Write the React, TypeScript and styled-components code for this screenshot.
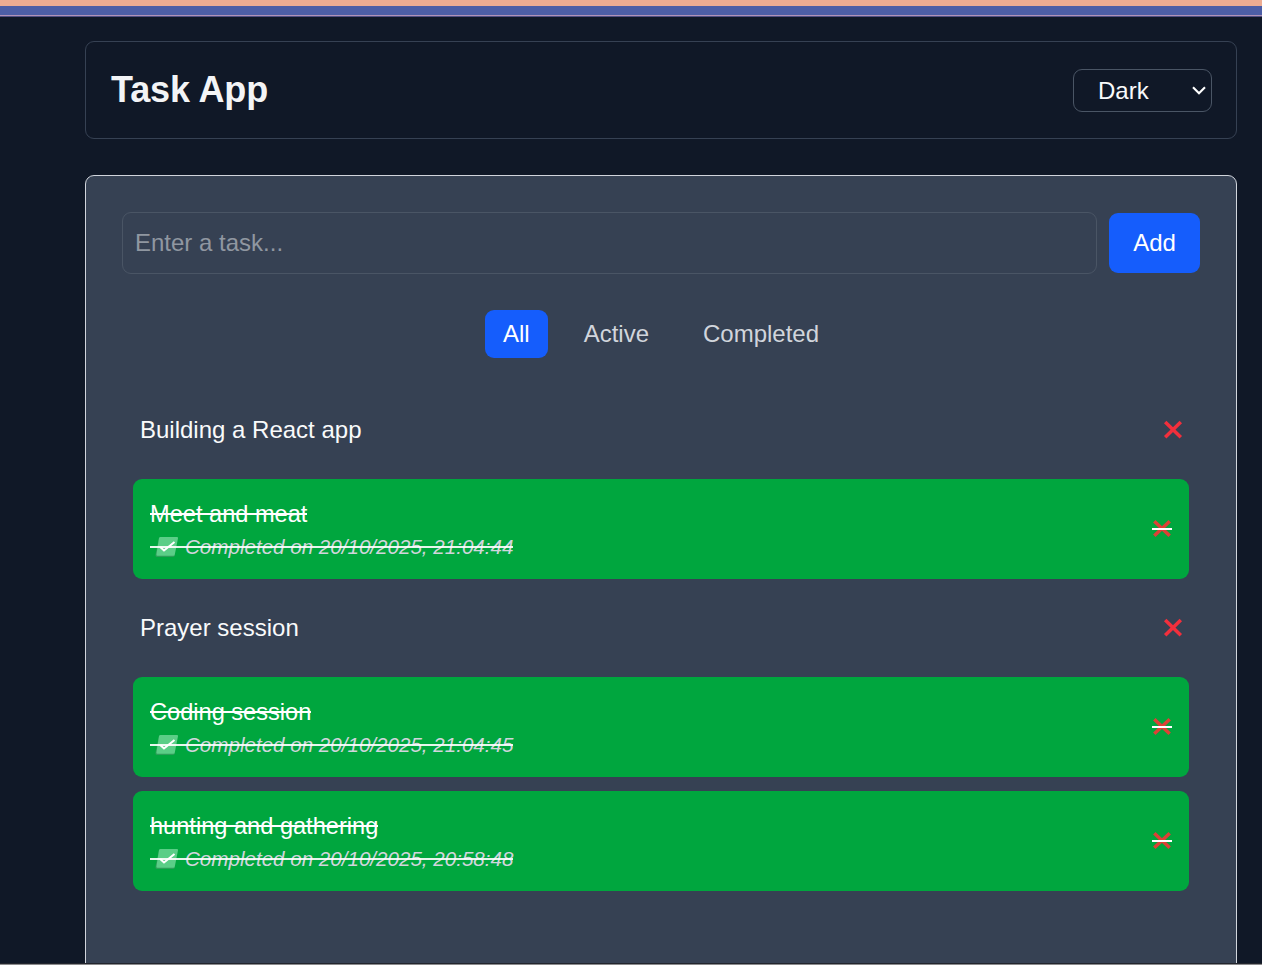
import React, { useState } from "react";
import styled, { createGlobalStyle } from "styled-components";

const GlobalStyle = createGlobalStyle`
  *, *::before, *::after { box-sizing: border-box; }
  body {
    margin: 0;
    background: #101827;
    color: #f9fafb;
    font-family: "Liberation Sans", Arial, sans-serif;
    font-size: 24px;
    line-height: 36px;
  }
  button, input, select { font: inherit; color: inherit; margin: 0; }
`;

const Screen = styled.div`
  height: 965px;
  display: flex;
  flex-direction: column;
  overflow: hidden;
`;

const Stripe = styled.div<{ $height: number; $color: string }>`
  flex: none;
  height: ${(p) => p.$height}px;
  background: ${(p) => p.$color};
`;

const Page = styled.div`
  flex: 1;
  min-height: 0;
  overflow: hidden;
  padding: 24px 25px 0 85px;
  display: flex;
  flex-direction: column;
  gap: 36px;
`;

const Header = styled.header`
  flex: none;
  height: 98px;
  padding: 0 24px 0 25px;
  display: flex;
  align-items: center;
  justify-content: space-between;
  border: 1px solid #364153;
  border-radius: 9px;
`;

const Title = styled.h1`
  margin: 0;
  font-size: 36px;
  line-height: 42px;
  font-weight: 700;
  letter-spacing: -0.12px;
  color: #f3f4f6;
`;

const SelectWrap = styled.div`
  position: relative;
  display: flex;
`;

const ThemeSelect = styled.select`
  appearance: none;
  width: 139px;
  height: 43px;
  padding: 2px 24px 0;
  background: transparent;
  border: 1px solid #4a5565;
  border-radius: 9px;
  line-height: 30px;
`;

const Chevron = styled.svg`
  position: absolute;
  right: 5px;
  top: 15px;
  pointer-events: none;
`;

const Panel = styled.main`
  flex: none;
  height: 1000px;
  padding: 36px;
  background: #364153;
  border: 1px solid #d1d5dc;
  border-radius: 9px;
`;

const Form = styled.form`
  display: flex;
  align-items: center;
  gap: 12px;
`;

const TaskInput = styled.input`
  flex: 1;
  min-width: 0;
  height: 62px;
  padding: 0 12px;
  background: transparent;
  border: 1px solid #4a5565;
  border-radius: 9px;
  &::placeholder { color: #9097a1; opacity: 1; }
`;

const AddButton = styled.button`
  width: 91px;
  height: 60px;
  padding: 0;
  border: 0;
  border-radius: 9px;
  background: #155dfc;
  color: #fff;
`;

const Filters = styled.nav`
  display: flex;
  justify-content: center;
  gap: 18px;
  margin: 36px 0 37px;
`;

const FilterButton = styled.button<{ $active: boolean }>`
  height: 48px;
  padding: 0 18px;
  border: 0;
  border-radius: 9px;
  background: ${(p) => (p.$active ? "#155dfc" : "transparent")};
  color: ${(p) => (p.$active ? "#fff" : "#d1d5dc")};
`;

const List = styled.ul`
  list-style: none;
  margin: 0;
  padding: 0 11px;
  display: flex;
  flex-direction: column;
  gap: 14px;
`;

const Item = styled.li<{ $done: boolean }>`
  display: flex;
  align-items: center;
  justify-content: space-between;
  height: ${(p) => (p.$done ? 100 : 70)}px;
  padding: ${(p) => (p.$done ? "0 17px" : "0 6px 0 7px")};
  border-radius: 9px;
  background: ${(p) => (p.$done ? "#00a63e" : "transparent")};
  color: ${(p) => (p.$done ? "#fff" : "#f9fafb")};
`;

const ItemBody = styled.div`
  display: flex;
  flex-direction: column;
  align-items: flex-start;
`;

const TaskText = styled.div<{ $done: boolean }>`
  position: relative;
  font-size: ${(p) => (p.$done ? 23.6 : 24)}px;
  &::after {
    content: "";
    display: ${(p) => (p.$done ? "block" : "none")};
    position: absolute;
    left: 0;
    right: 0;
    top: 17px;
    height: 2px;
    background: #fff;
  }
`;

const DoneNote = styled.div`
  position: relative;
  display: flex;
  align-items: center;
  height: 30px;
  font-size: 20.58px;
  line-height: 30px;
  font-style: italic;
  color: #d1d5dc;
  &::after {
    content: "";
    position: absolute;
    left: 0;
    right: 0;
    top: 14px;
    height: 2px;
    background: rgba(255, 255, 255, 0.9);
  }
`;

const NoteIcon = styled.svg`
  flex: none;
  margin: 0 6px 0 4px;
`;

const RemoveButton = styled.button`
  display: flex;
  padding: 0;
  border: 0;
  background: none;
`;

function CheckIcon() {
  return (
    <NoteIcon width="25" height="22" viewBox="0 0 25 22">
      <path d="M5 1.5 L1.6 18 Q1 21 3 21 L19 21 Q20.6 21 21 19.2 Z" fill="#2c9d58" />
      <path d="M6.4 1 H23 Q24.2 1 24 2.2 L20.8 18.6 Q20.6 19.8 19.4 19.8 H3.4 Q2.2 19.8 2.4 18.6 L5 2.2 Q5.2 1 6.4 1Z" fill="#5bce87" />
      <path d="M6.2 11 L10 14.5 L20.5 6" fill="none" stroke="#fff" strokeWidth="2" />
    </NoteIcon>
  );
}

function CrossIcon({ struck }: { struck: boolean }) {
  return (
    <svg width="20" height="20" viewBox="0 0 20 20">
      <path
        d={struck ? "M2.3 2.3 L17.7 16.8 M17.7 2.3 L2.3 16.8" : "M2.2 2 L17.8 17.2 M17.8 2 L2.2 17.2"}
        stroke={struck ? "#dc4136" : "#f22f3c"}
        strokeWidth="3.5"
        fill="none"
      />
      {struck && <path d="M0 10 H20" stroke="#fff" strokeWidth="2" />}
    </svg>
  );
}

interface Task {
  text: string;
  completedAt?: string;
}

const initialTasks: Task[] = [
  { text: "Building a React app" },
  { text: "Meet and meat", completedAt: "20/10/2025, 21:04:44" },
  { text: "Prayer session" },
  { text: "Coding session", completedAt: "20/10/2025, 21:04:45" },
  { text: "hunting and gathering", completedAt: "20/10/2025, 20:58:48" },
];

const filters = ["All", "Active", "Completed"];

export default function App() {
  const [tasks, setTasks] = useState(initialTasks);
  const [filter, setFilter] = useState("All");
  const [draft, setDraft] = useState("");

  const visible = tasks.filter(
    (t) => filter === "All" || (filter === "Completed") === Boolean(t.completedAt)
  );

  const addTask = (e: React.FormEvent) => {
    e.preventDefault();
    if (!draft.trim()) return;
    setTasks([...tasks, { text: draft.trim() }]);
    setDraft("");
  };

  return (
    <>
      <GlobalStyle />
      <Screen>
        <Stripe $height={6} $color="#edac92" />
        <Stripe $height={9} $color="#4d5ea6" />
        <Stripe $height={1} $color="#b193b8" />
        <Stripe $height={1} $color="#514f83" />
        <Page>
          <Header>
            <Title>Task App</Title>
            <SelectWrap>
              <ThemeSelect defaultValue="Dark">
                <option>Dark</option>
                <option>Light</option>
              </ThemeSelect>
              <Chevron width="16" height="14" viewBox="0 0 16 14">
                <path d="M2 3.2 L8 9.2 L14 3.2" fill="none" stroke="#fff" strokeWidth="2.1" />
              </Chevron>
            </SelectWrap>
          </Header>
          <Panel>
            <Form onSubmit={addTask}>
              <TaskInput
                placeholder="Enter a task..."
                value={draft}
                onChange={(e) => setDraft(e.target.value)}
              />
              <AddButton>Add</AddButton>
            </Form>
            <Filters>
              {filters.map((f) => (
                <FilterButton key={f} $active={f === filter} onClick={() => setFilter(f)}>
                  {f}
                </FilterButton>
              ))}
            </Filters>
            <List>
              {visible.map((t) => {
                const done = Boolean(t.completedAt);
                return (
                  <Item key={t.text} $done={done}>
                    <ItemBody>
                      <TaskText $done={done}>{t.text}</TaskText>
                      {done && (
                        <DoneNote>
                          <CheckIcon />
                          Completed on {t.completedAt}
                        </DoneNote>
                      )}
                    </ItemBody>
                    <RemoveButton
                      aria-label="Remove"
                      onClick={() => setTasks(tasks.filter((x) => x !== t))}
                    >
                      <CrossIcon struck={done} />
                    </RemoveButton>
                  </Item>
                );
              })}
            </List>
          </Panel>
        </Page>
        <Stripe $height={1} $color="#22252d" />
        <Stripe $height={1} $color="#8b8b8d" />
      </Screen>
    </>
  );
}
